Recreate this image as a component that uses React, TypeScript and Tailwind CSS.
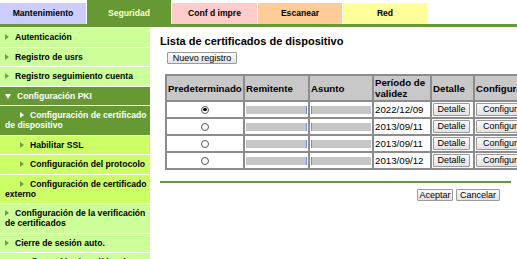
import React from 'react';

type Tab = { label: string; cls: string };

const TABS: Tab[] = [
  { label: 'Mantenimiento', cls: 'w-[86px] h-[21px] bg-[#ccccff] text-black' },
  { label: 'Seguridad', cls: 'w-[84px] h-[24px] bg-[#669933] text-[#ffffcc] pt-[3px]' },
  { label: 'Conf d impre', cls: 'w-[85px] h-[21px] bg-[#ffcccc] text-black' },
  { label: 'Escanear', cls: 'w-[84px] h-[21px] bg-[#ffcc99] text-black' },
  { label: 'Red', cls: 'w-[84px] h-[21px] bg-[#ffff99] text-black' },
];

type NavKind = 'top' | 'sub' | 'open' | 'active';
type NavItem = { label: string; kind: NavKind; indent?: boolean };

const NAV: NavItem[] = [
  { label: 'Autenticación', kind: 'top' },
  { label: 'Registro de usrs', kind: 'top' },
  { label: 'Registro seguimiento cuenta', kind: 'top' },
  { label: 'Configuración PKI', kind: 'open' },
  { label: 'Configuración de certificado de dispositivo', kind: 'active', indent: true },
  { label: 'Habilitar SSL', kind: 'sub', indent: true },
  { label: 'Configuración del protocolo', kind: 'sub', indent: true },
  { label: 'Configuración de certificado externo', kind: 'sub', indent: true },
  { label: 'Configuración de la verificación de certificados', kind: 'top' },
  { label: 'Cierre de sesión auto.', kind: 'top' },
  { label: 'Configuración de política de contraseña', kind: 'top' },
];

const ROWS = [
  { date: '2022/12/09', checked: true },
  { date: '2013/09/11', checked: false },
  { date: '2013/09/11', checked: false },
  { date: '2013/09/12', checked: false },
];

function Arrow({ down, color }: { down?: boolean; color: string }) {
  if (down) {
    return (
      <svg width="6" height="5" viewBox="0 0 6 5" className="inline-block mr-[6px] align-[0px]">
        <path d="M0 0 L6 0 L3 5 Z" fill={color} />
      </svg>
    );
  }
  return (
    <svg width="4" height="6" viewBox="0 0 4 6" className="inline-block mr-[6px] align-[0px]">
      <path d="M0 0 L4 3 L0 6 Z" fill={color} />
    </svg>
  );
}

function NavRow({ item }: { item: NavItem }) {
  const bg =
    item.kind === 'top'
      ? 'bg-[#ccff99] text-black'
      : item.kind === 'sub'
        ? 'bg-[#ccff66] text-black'
        : 'bg-[#669933] text-white';
  const arrowColor = item.kind === 'open' || item.kind === 'active' ? '#ffffff' : '#7b9a4e';
  return (
    <div
      className={`border-t border-white pl-[5px] pr-[2px] py-[4.25px] text-[8.6px] leading-[10px] font-bold ${bg} ${
        item.indent ? 'indent-[15px]' : ''
      }`}
    >
      <Arrow down={item.kind === 'open'} color={arrowColor} />
      {item.label}
    </div>
  );
}

function Btn({ children, className = '' }: { children: React.ReactNode; className?: string }) {
  return (
    <button
      className={`flex items-center justify-center border border-[#9a9a9a] rounded-[1px] bg-gradient-to-b from-[#fbfbfb] to-[#e2e2e2] text-[9px] leading-[9px] text-black whitespace-nowrap ${className}`}
    >
      {children}
    </button>
  );
}

function Radio({ checked }: { checked: boolean }) {
  return (
    <span className="flex items-center justify-center w-[8px] h-[8px] rounded-full border border-[#555] bg-white">
      {checked && <span className="w-[3.5px] h-[3.5px] rounded-full bg-black" />}
    </span>
  );
}

const cell = 'border-2 border-[#8c8c8c] px-[1px]';

export default function App() {
  return (
    <div className="w-[517px] h-[259px] overflow-hidden bg-white text-black font-['Liberation_Sans',Arial,sans-serif]">
      <div className="flex items-end h-[24px] gap-[1px]">
        {TABS.map(t => (
          <div
            key={t.label}
            className={`flex items-center justify-center text-[8.6px] font-bold ${t.cls}`}
          >
            {t.label}
          </div>
        ))}
      </div>
      <div className="h-[3px] bg-[#669933]" />

      <div className="flex">
        <nav className="w-[150px] shrink-0">
          {NAV.map(item => (
            <NavRow key={item.label} item={item} />
          ))}
        </nav>

        <main className="ml-[10px] w-[351px] shrink-0 pt-[7.5px]">
          <h1 className="text-[11px] leading-[13px] font-bold whitespace-nowrap">
            Lista de certificados de dispositivo
          </h1>
          <div className="flex pl-[7px] pt-[4.5px]">
            <Btn className="h-[12px] w-[70px]">Nuevo registro</Btn>
          </div>

          <table className="ml-[5px] mt-[10px] border-collapse table-fixed w-[366px] border-2 border-[#8c8c8c]">
            <colgroup>
              <col className="w-[78px]" />
              <col className="w-[65px]" />
              <col className="w-[64px]" />
              <col className="w-[58px]" />
              <col className="w-[43px]" />
              <col className="w-[58px]" />
            </colgroup>
            <thead>
              <tr className="h-[26px] bg-[#c8c8c8] text-[9.7px] leading-[11px] font-bold text-left">
                <th className={`${cell} font-bold`}>Predeterminado</th>
                <th className={`${cell} font-bold`}>Remitente</th>
                <th className={`${cell} font-bold`}>Asunto</th>
                <th className={`${cell} font-bold`}>Período de validez</th>
                <th className={`${cell} font-bold`}>Detalle</th>
                <th className={`${cell} font-bold whitespace-nowrap`}>Configurar</th>
              </tr>
            </thead>
            <tbody>
              {ROWS.map((r, i) => (
                <tr key={i} className="h-[17px] text-[9.7px]">
                  <td className="border-2 border-[#8c8c8c]">
                    <div className="flex justify-center">
                      <Radio checked={r.checked} />
                    </div>
                  </td>
                  <td className={cell}>
                    <div className="flex items-center h-[9px]">
                      <div className="h-[8px] flex-1 bg-[#c6c6c6] blur-[0.6px]" />
                      <div className="h-[8px] w-[1px] bg-[#6d8fd6]" />
                    </div>
                  </td>
                  <td className={cell}>
                    <div className="flex items-center h-[9px]">
                      <div className="h-[8px] w-[1px] bg-[#c97a4a]" />
                      <div className="h-[8px] flex-1 bg-[#c6c6c6] blur-[0.6px]" />
                    </div>
                  </td>
                  <td className={`${cell} leading-[11px]`}>{r.date}</td>
                  <td className={cell}>
                    <Btn className="h-[13px] w-[37px]">Detalle</Btn>
                  </td>
                  <td className={cell}>
                    <Btn className="h-[13px] px-[6px]">Configurar</Btn>
                  </td>
                </tr>
              ))}
            </tbody>
          </table>

          <div className="mt-[11px] h-[2px] bg-[#669933]" />
          <div className="flex justify-end gap-[3px] mt-[6px] mr-[11px]">
            <Btn className="h-[12px] w-[36px]">Aceptar</Btn>
            <Btn className="h-[12px] w-[44px]">Cancelar</Btn>
          </div>
        </main>
      </div>
    </div>
  );
}
